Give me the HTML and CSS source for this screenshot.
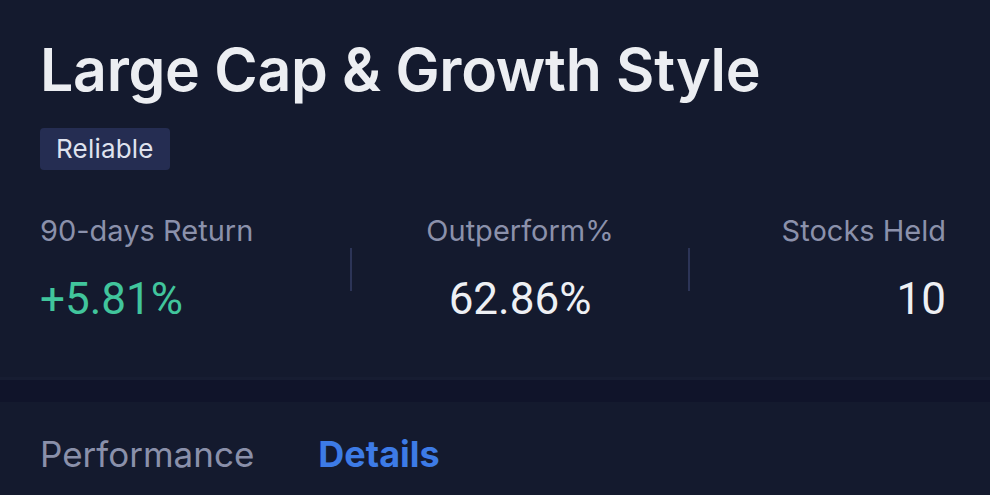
FILE: index.html
```html
<!DOCTYPE html>
<html>
<head>
<meta charset="utf-8">
<link rel="stylesheet" href="styles.css">
</head>
<body>
<div class="page">
  <section class="summary">
    <h1 class="title">Large Cap &amp; Growth Style</h1>
    <div class="badge-row"><span class="badge">Reliable</span></div>
    <div class="stats">
      <div class="stat stat-left">
        <div class="label">90-days Return</div>
        <div class="value up">+5.81%</div>
      </div>
      <div class="divider"></div>
      <div class="stat stat-mid">
        <div class="label">Outperform%</div>
        <div class="value">62.86%</div>
      </div>
      <div class="divider"></div>
      <div class="stat stat-right">
        <div class="label">Stocks Held</div>
        <div class="value">10</div>
      </div>
    </div>
  </section>
  <div class="band"></div>
  <nav class="tabs">
    <span class="tab">Performance</span>
    <span class="tab active">Details</span>
  </nav>
</div>
</body>
</html>
```
FILE: styles.css
```css
* { box-sizing: border-box; }
html, body { margin: 0; padding: 0; }
body {
  background: #141a2e;
  font-family: Inter, "Liberation Sans", sans-serif;
  color: #e8e9ee;
  width: 990px;
  height: 495px;
  overflow: hidden;
}
.summary {
  padding: 34px 44px 0 40px;
  height: 380px;
  border-bottom: 3px solid #171d32;
}
.title {
  margin: 0;
  font-size: 59px;
  font-weight: 600;
  line-height: 72px;
  letter-spacing: -0.3px;
  color: #eceef2;
}
.badge-row {
  display: flex;
  margin-top: 22px;
}
.badge {
  height: 42px;
  line-height: 42px;
  padding: 0 16px;
  border-radius: 4px;
  background: #252d52;
  color: #dfe2ee;
  font-size: 26px;
  letter-spacing: 0.2px;
}
.stats {
  display: flex;
  align-items: flex-start;
  margin-top: 44px;
}
.stat { display: flex; flex-direction: column; gap: 29px; }
.stat-left { width: 310px; align-items: flex-start; }
.stat-mid { width: 336px; align-items: center; }
.stat-right { flex: 1; align-items: flex-end; }
.divider {
  width: 2px;
  height: 43px;
  background: #2c3457;
  margin-top: 34px;
}
.label {
  font-size: 29px;
  color: #8b91ab;
  line-height: 34px;
}
.value {
  font-family: Roboto, "Liberation Sans", sans-serif;
  font-size: 44px;
  line-height: 44px;
  color: #eef0f4;
}
.value.up { color: #41c59c; }
.band {
  height: 22px;
  background: #10142a;
}
.tabs {
  display: flex;
  gap: 64px;
  padding: 30px 40px 0 40px;
}
.tab {
  font-size: 35px;
  color: #8a90aa;
  line-height: 44px;
}
.tab.active {
  color: #3d7be6;
  font-weight: 700;
  font-size: 36px;
}
```
